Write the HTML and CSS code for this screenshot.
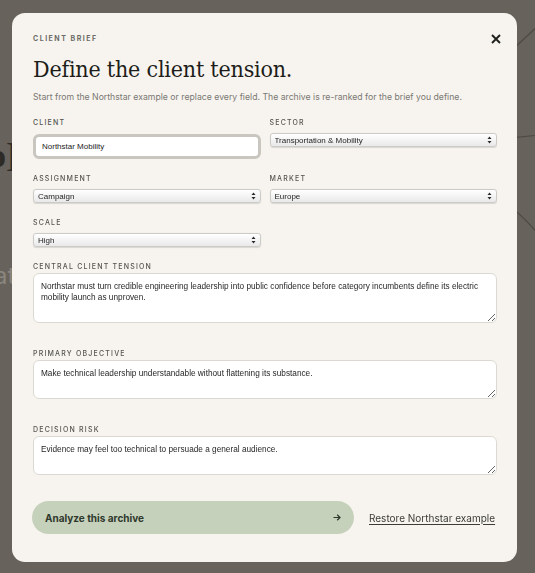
FILE: index.html
```html
<!DOCTYPE html>
<html lang="en">
<head>
<meta charset="utf-8">
<title>Client brief</title>
<link rel="stylesheet" href="styles.css">
</head>
<body>
<div class="backdrop">
  <svg class="bg-lines" width="535" height="573" viewBox="0 0 535 573" aria-hidden="true">
    <path d="M500 62 Q518 44 540 24" />
    <path d="M500 139 L540 135" />
    <path d="M500 200 Q518 210 540 236" />
  </svg>
  <span class="bg-word bg-word-top" aria-hidden="true">o]</span>
  <span class="bg-word bg-word-low" aria-hidden="true">at</span>

  <section class="modal" role="dialog" aria-labelledby="brief-title">
    <header class="modal-head">
      <p class="eyebrow">CLIENT BRIEF</p>
      <button class="close" type="button" aria-label="Close">
        <svg width="10" height="10" viewBox="0 0 10 10"><path d="M1 1 L9 9 M9 1 L1 9"/></svg>
      </button>
    </header>
    <h1 id="brief-title" class="title">Define the client tension.</h1>
    <p class="lede">Start from the Northstar example or replace every field. The archive is re-ranked for the brief you define.</p>

    <div class="grid">
      <div class="field">
        <label class="label" for="client">CLIENT</label>
        <input id="client" class="text-input" type="text" value="Northstar Mobility" autofocus>
      </div>
      <div class="field">
        <label class="label" for="sector">SECTOR</label>
        <div class="select">
          <select id="sector"><option>Transportation &amp; Mobility</option></select>
          <svg class="chev" width="5" height="8" viewBox="0 0 5 8"><path d="M2.5 0.5 L4.5 3 L0.5 3 Z M2.5 7.5 L4.5 5 L0.5 5 Z"/></svg>
        </div>
      </div>
      <div class="field">
        <label class="label" for="assignment">ASSIGNMENT</label>
        <div class="select">
          <select id="assignment"><option>Campaign</option></select>
          <svg class="chev" width="5" height="8" viewBox="0 0 5 8"><path d="M2.5 0.5 L4.5 3 L0.5 3 Z M2.5 7.5 L4.5 5 L0.5 5 Z"/></svg>
        </div>
      </div>
      <div class="field">
        <label class="label" for="market">MARKET</label>
        <div class="select">
          <select id="market"><option>Europe</option></select>
          <svg class="chev" width="5" height="8" viewBox="0 0 5 8"><path d="M2.5 0.5 L4.5 3 L0.5 3 Z M2.5 7.5 L4.5 5 L0.5 5 Z"/></svg>
        </div>
      </div>
      <div class="field">
        <label class="label" for="scale">SCALE</label>
        <div class="select">
          <select id="scale"><option>High</option></select>
          <svg class="chev" width="5" height="8" viewBox="0 0 5 8"><path d="M2.5 0.5 L4.5 3 L0.5 3 Z M2.5 7.5 L4.5 5 L0.5 5 Z"/></svg>
        </div>
      </div>
    </div>

    <div class="area-field first">
      <label class="label" for="tension">CENTRAL CLIENT TENSION</label>
      <textarea id="tension" class="area tall">Northstar must turn credible engineering leadership into public confidence before category incumbents define its electric mobility launch as unproven.</textarea>
    </div>
    <div class="area-field">
      <label class="label" for="objective">PRIMARY OBJECTIVE</label>
      <textarea id="objective" class="area">Make technical leadership understandable without flattening its substance.</textarea>
    </div>
    <div class="area-field">
      <label class="label" for="risk">DECISION RISK</label>
      <textarea id="risk" class="area">Evidence may feel too technical to persuade a general audience.</textarea>
    </div>

    <div class="actions">
      <button class="analyze" type="button">
        <span>Analyze this archive</span>
        <svg width="8" height="7" viewBox="0 0 8 7"><path d="M0.5 3.5 H7 M4.2 0.8 L7 3.5 L4.2 6.2"/></svg>
      </button>
      <a class="restore" href="#">Restore Northstar example</a>
    </div>
  </section>
</div>
</body>
</html>
```

FILE: styles.css
```css
* { box-sizing: border-box; }

html, body {
  margin: 0;
  padding: 0;
}

body {
  background: #67625b;
  font-family: Inter, "Noto Sans", sans-serif;
  width: 535px;
  height: 573px;
  overflow: hidden;
}

.backdrop {
  position: relative;
  height: 573px;
  padding: 13px 0 0 12px;
}

.bg-lines {
  position: absolute;
  left: 0;
  top: 0;
}

.bg-lines path {
  fill: none;
  stroke: #4e4a44;
  stroke-width: 1.2;
}

.bg-word {
  position: absolute;
  white-space: nowrap;
}

.bg-word-top {
  left: -11px;
  top: 136px;
  font: 700 34px/40px "Liberation Serif", serif;
  color: #2e2b27;
}

.bg-word-low {
  left: -6px;
  top: 262px;
  font: 400 24px/28px Inter, sans-serif;
  color: #8a857d;
}

.modal {
  position: relative;
  z-index: 1;
  width: 505px;
  background: #f7f4ef;
  border-radius: 13px;
  padding: 21px 20px 28px 21px;
}

.modal-head {
  display: flex;
  justify-content: space-between;
  align-items: center;
  height: 10px;
}

.eyebrow {
  margin: 0;
  font-size: 7px;
  line-height: 10px;
  font-weight: 700;
  letter-spacing: 1.5px;
  color: #6c6b66;
}

.close {
  border: 0;
  background: none;
  padding: 0;
  margin-right: -4px;
  width: 10px;
  height: 10px;
  display: flex;
}

.close path {
  stroke: #1f1f1d;
  stroke-width: 1.9;
  fill: none;
}

.title {
  margin: 10px 0 0;
  font-family: "DejaVu Serif", serif;
  font-stretch: condensed;
  font-weight: 400;
  font-size: 23px;
  line-height: 30px;
  letter-spacing: -0.2px;
  color: #1d1d1a;
}

.lede {
  margin: 7px 0 0;
  font-size: 8.7px;
  line-height: 12px;
  color: #7a7872;
}

.grid {
  margin-top: 15px;
  display: grid;
  grid-template-columns: 1fr 1fr;
  column-gap: 9px;
  row-gap: 15px;
  align-items: start;
}

.field {
  display: flex;
  flex-direction: column;
  gap: 5px;
}

.label {
  display: block;
  font-size: 7px;
  line-height: 10px;
  font-weight: 500;
  letter-spacing: 1.2px;
  color: #55544f;
}

.text-input {
  height: 25px;
  width: 100%;
  margin-top: 1px;
  border: 3px solid #c9c6c0;
  border-radius: 6px;
  background: #fff;
  padding: 0 6px;
  font: 8px "Liberation Sans", Arial, sans-serif;
  color: #1c1c1c;
  outline: none;
}

.select {
  position: relative;
}

.select select {
  -webkit-appearance: none;
  appearance: none;
  display: block;
  width: 100%;
  height: 14px;
  border: 1px solid #cdcbc7;
  border-radius: 3px;
  background: linear-gradient(#ffffff, #e9e9e9);
  padding: 0 14px 0 4px;
  font: 8px "Liberation Sans", Arial, sans-serif;
  color: #1f1f1f;
  box-shadow: 0 0.5px 1px rgba(0, 0, 0, 0.12);
}

.chev {
  position: absolute;
  right: 5px;
  top: 3px;
  pointer-events: none;
}

.chev path {
  fill: #2a2a2a;
}

.area-field {
  margin-top: 26px;
  display: flex;
  flex-direction: column;
  gap: 1px;
}

.area-field.first {
  margin-top: 15px;
}

.area {
  display: block;
  width: 100%;
  height: 39px;
  border: 1px solid #dcd9d2;
  border-radius: 6px;
  background: #fff;
  padding: 7px 7px;
  font: 8.25px/11px "Liberation Sans", Arial, sans-serif;
  color: #272727;
  resize: vertical;
  overflow: hidden;
}

.area.tall {
  height: 50px;
}

.actions {
  margin-top: 26px;
  display: flex;
  align-items: center;
  gap: 15px;
}

.analyze {
  display: flex;
  justify-content: space-between;
  align-items: center;
  width: 322px;
  height: 33px;
  margin-left: -1px;
  border: 0;
  border-radius: 17px;
  background: #c6d1bb;
  padding: 0 13px 0 13px;
  font-family: Inter, sans-serif;
  font-size: 10px;
  font-weight: 700;
  color: #2e382c;
}

.analyze path {
  fill: none;
  stroke: #2e382c;
  stroke-width: 1.2;
}

.restore {
  font-size: 10px;
  color: #3c3b37;
  text-decoration: underline;
  text-underline-offset: 2px;
  text-decoration-thickness: 1px;
}
```
